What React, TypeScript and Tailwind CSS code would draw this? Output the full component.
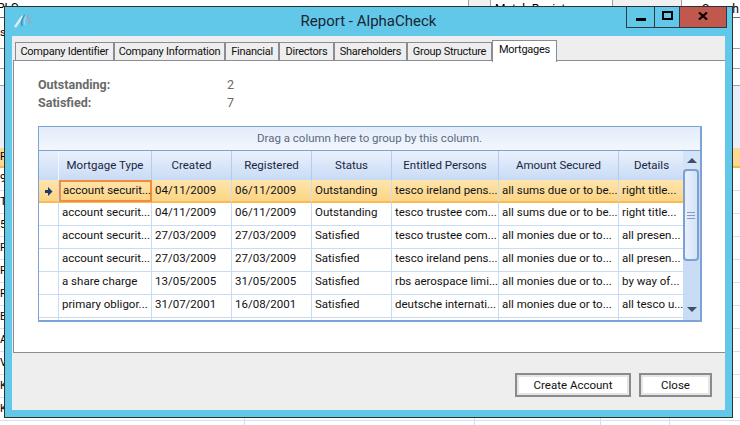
const tabs = [
  { label: "Company Identifier", width: "w-[99px]" },
  { label: "Company Information", width: "w-[111px]" },
  { label: "Financial", width: "w-[54px]" },
  { label: "Directors", width: "w-[55px]" },
  { label: "Shareholders", width: "w-[73px]" },
  { label: "Group Structure", width: "w-[85px]" },
];

const headers = ["Mortgage Type", "Created", "Registered", "Status", "Entitled Persons", "Amount Secured", "Details"];

const rows = [
  ["account securit...", "04/11/2009", "06/11/2009", "Outstanding", "tesco ireland pens...", "all sums due or to be...", "right title..."],
  ["account securit...", "04/11/2009", "06/11/2009", "Outstanding", "tesco trustee com...", "all sums due or to be...", "right title..."],
  ["account securit...", "27/03/2009", "27/03/2009", "Satisfied", "tesco trustee com...", "all monies due or to...", "all presen..."],
  ["account securit...", "27/03/2009", "27/03/2009", "Satisfied", "tesco ireland pens...", "all monies due or to...", "all presen..."],
  ["a share charge", "13/05/2005", "31/05/2005", "Satisfied", "rbs aerospace limi...", "all monies due or to...", "by way of..."],
  ["primary obligor...", "31/07/2001", "16/08/2001", "Satisfied", "deutsche internati...", "all monies due or to...", "all tesco u..."],
];

const columns = "grid grid-cols-[20px_93px_80px_80px_80px_107px_120px_66px]";
const backdropLetters = ["9", "T", "5", "P", "P", "R", "B", "A", "V", "K", "K"];

function Backdrop() {
  return (
    <div className="flex h-full w-full flex-col text-[11px] text-black">
      <div className="relative h-[18px] overflow-hidden border-b border-gray-500">
        <span className="absolute left-[-3px] top-[-1px] text-[12px]">PLC</span>
        <div className="absolute left-[468px] top-0 h-[6px] w-[23px] border-x border-gray-400 bg-[#f0f0f0]" />
        <span className="absolute left-[495px] top-0 text-[12px]">Match Register</span>
        <div className="absolute left-[612px] top-0 h-[6px] w-[70px] border-x border-gray-400 bg-[#f0f0f0]" />
        <span className="absolute left-[702px] top-0 text-[12px]">Search</span>
      </div>
      <div className="flex h-[31px] items-center border-b border-gray-400">s</div>
      <div className="h-[20px] border-b border-gray-400" />
      <div className="h-[17px] border-b border-gray-400" />
      <div className="h-[62px] bg-[#e8f0fb]" />
      <div className="flex h-[20px] items-center border-b-2 border-[#f9b84e] bg-[#fdd994]">P</div>
      {backdropLetters.map((letter, i) => (
        <div key={i} className="flex h-[23px] shrink-0 items-center border-b border-[#d4dfee]">
          {letter}
        </div>
      ))}
      <div className="relative flex-1">
        <div className="absolute left-[244px] top-[-4px] h-[12px] w-px bg-[#d4dfee]" />
        <div className="absolute left-[474px] top-[-4px] h-[12px] w-px bg-[#d4dfee]" />
        <div className="absolute left-[600px] top-[-4px] h-[12px] w-px bg-[#d4dfee]" />
        <div className="absolute left-[669px] top-[-4px] h-[12px] w-px bg-[#d4dfee]" />
      </div>
    </div>
  );
}

function TitleBar() {
  return (
    <div className="relative flex h-[29px] shrink-0 items-center justify-center pb-[1px]">
      <svg className="absolute left-[2px] top-[6px]" width="18" height="16" viewBox="0 0 18 16" fill="none">
        <path d="M1 14 C4 10 6 6 9 3" stroke="#dfeef6" strokeWidth="2.4" />
        <path d="M8 13 C7 9 8 5 11 2" stroke="#3f93c0" strokeWidth="1.6" />
        <path d="M11 12 C10 9 11 5 12 2" stroke="#9fd4e8" strokeWidth="1.4" />
        <path d="M12 2 C15 4 16 7 16 11" stroke="#9aa9b2" strokeWidth="1.8" />
      </svg>
      <span className="text-[15px] text-[#1a2530]">Report - AlphaCheck</span>
      <div className="absolute right-[-2px] top-0 flex h-[21px] border-x border-b border-[#2f3a40]">
        <div className="flex w-[28px] items-center justify-center border-r border-[#2f3a40]">
          <div className="mt-[4px] h-[3px] w-[10px] bg-black" />
        </div>
        <div className="flex w-[25px] items-center justify-center border-r border-[#2f3a40]">
          <div className="mb-[3px] h-[9px] w-[11px] border-2 border-black" />
        </div>
        <div className="flex w-[46px] items-center justify-center bg-[#c1584d]">
          <svg className="mb-[3px]" width="10" height="8" viewBox="0 0 10 8">
            <path d="M1 0.5 L9 7.5 M9 0.5 L1 7.5" stroke="#000" strokeWidth="2.2" />
          </svg>
        </div>
      </div>
    </div>
  );
}

function TabStrip() {
  return (
    <div className="flex h-[24px] shrink-0 items-end pl-[3px]">
      {tabs.map((t) => (
        <div
          key={t.label}
          className={`${t.width} flex h-[18px] items-center justify-center whitespace-nowrap border-x border-t border-[#8b8b93] bg-[#eeeeee] pt-[1px] text-[11px] tracking-[-0.25px] text-[#111]`}
        >
          {t.label}
        </div>
      ))}
      <div className="relative z-10 mb-[-2px] flex h-[22px] w-[65px] items-start justify-center border-x border-t border-[#8b8b93] bg-white pt-[1px] text-[11px] tracking-[-0.25px] text-[#111]">
        Mortgages
      </div>
    </div>
  );
}

function Scrollbar() {
  return (
    <div className="flex w-[17px] flex-col bg-[#c9dcf5]">
      <div className="flex h-[18px] shrink-0 items-center justify-center bg-[#d5e3f6]">
        <div className="h-0 w-0 border-x-[5px] border-b-[5px] border-x-transparent border-b-[#3d4f6b]" />
      </div>
      <div className="flex h-[92px] w-[16px] shrink-0 items-center justify-center rounded-sm border-2 border-[#7ba0d4] bg-gradient-to-r from-[#e9f0fb] to-[#d5e3f6]">
        <div className="flex w-[8px] flex-col gap-[2px]">
          <div className="h-px bg-[#7f9ccb]" />
          <div className="h-px bg-[#7f9ccb]" />
          <div className="h-px bg-[#7f9ccb]" />
        </div>
      </div>
      <div className="flex flex-1 items-end justify-center pb-[8px]">
        <div className="h-0 w-0 border-x-[5px] border-t-[5px] border-x-transparent border-t-[#3d4f6b]" />
      </div>
    </div>
  );
}

function MortgageGrid() {
  return (
    <div className="flex h-[196px] flex-col overflow-hidden border-2 border-[#7ba3d8] border-l-[1px] border-t-[1px]">
      <div className="flex h-[24px] shrink-0 items-center justify-center border-b border-[#7ba3d8] bg-gradient-to-b from-[#e3ecfa] to-[#f3f7fd] text-[11.5px] text-[#5a6a80]">
        Drag a column here to group by this column.
      </div>
      <div className="flex min-h-0 flex-1">
        <div className="min-w-0 flex-1">
          <div className={`${columns} h-[29px]`}>
            <div className="border-r border-[#f4f8fe] bg-gradient-to-b from-[#e8f0fc] to-[#c8dbf5]" />
            {headers.map((h) => (
              <div
                key={h}
                className="flex items-center justify-center border-r border-[#b5cdec] bg-gradient-to-b from-[#eaf1fc] to-[#c8dbf5] text-[11.5px] text-[#1c2540]"
              >
                {h}
              </div>
            ))}
          </div>
          {rows.map((row, i) => (
            <div
              key={i}
              className={
                i === 0
                  ? `${columns} h-[23px] border-b-2 border-[#f9bb55] bg-gradient-to-b from-[#fee5ad] to-[#fdd484]`
                  : `${columns} h-[23px] border-b border-[#c9dcf5] bg-white`
              }
            >
              <div className="flex items-center justify-center border-r border-[#c9dcf5]">
                {i === 0 && (
                  <svg width="8" height="9" viewBox="0 0 8 9">
                    <path d="M0 3 H3 V0 L7.5 4.5 L3 9 V6 H0 Z" fill="#1f3a6b" />
                  </svg>
                )}
              </div>
              {row.map((cell, j) => (
                <div
                  key={j}
                  className={
                    i === 0 && j === 0
                      ? "flex items-center whitespace-nowrap border-2 border-[#f58c3c] pb-[1px] pl-[2px] text-[11.5px] text-[#111]"
                      : "flex items-center overflow-hidden whitespace-nowrap border-r border-[#c9dcf5] pb-[2px] pl-[3px] text-[11.5px] text-[#111]"
                  }
                >
                  {cell}
                </div>
              ))}
            </div>
          ))}
          <div className={`${columns} h-[6px]`}>
            <div className="border-r border-[#c9dcf5]" />
            {headers.map((h) => (
              <div key={h} className="border-r border-[#c9dcf5]" />
            ))}
          </div>
        </div>
        <Scrollbar />
      </div>
    </div>
  );
}

export default function App() {
  return (
    <div className="relative h-[425px] w-[740px] overflow-hidden bg-white font-['Roboto',sans-serif]">
      <Backdrop />
      {/* dialog window */}
      <div className="absolute left-[4px] top-[6px] flex h-[412px] w-[729px] flex-col border border-[#2b3236] bg-[#62c8e9] px-[7px] pb-[7px]">
        <TitleBar />
        <div className="flex min-h-0 flex-1 flex-col bg-[#eeeeee]">
          <TabStrip />
          <div className="ml-px flex h-[293px] shrink-0 flex-col border-y border-l border-[#8b8b93] bg-white pl-[24px] pr-[23px]">
            <div className="grid grid-cols-[189px_1fr] pt-[15px] text-[12.5px] font-bold leading-[18px] text-[#6a6a6a]">
              <span>Outstanding:</span>
              <span className="font-normal">2</span>
              <span>Satisfied:</span>
              <span className="font-normal">7</span>
            </div>
            <div className="mt-[14px]">
              <MortgageGrid />
            </div>
          </div>
          <div className="flex flex-1 items-start justify-end gap-[8px] pr-[13px] pt-[20px]">
            <button className="h-[24px] w-[116px] border-2 border-[#8b8b8b] bg-white pt-[1px] text-[11.5px] text-[#111] outline outline-2 -outline-offset-4 outline-[#e6e6e6]">
              Create Account
            </button>
            <button className="h-[24px] w-[73px] border-2 border-[#8b8b8b] bg-white pt-[1px] text-[11.5px] text-[#111] outline outline-2 -outline-offset-4 outline-[#e6e6e6]">
              Close
            </button>
          </div>
        </div>
      </div>
    </div>
  );
}
